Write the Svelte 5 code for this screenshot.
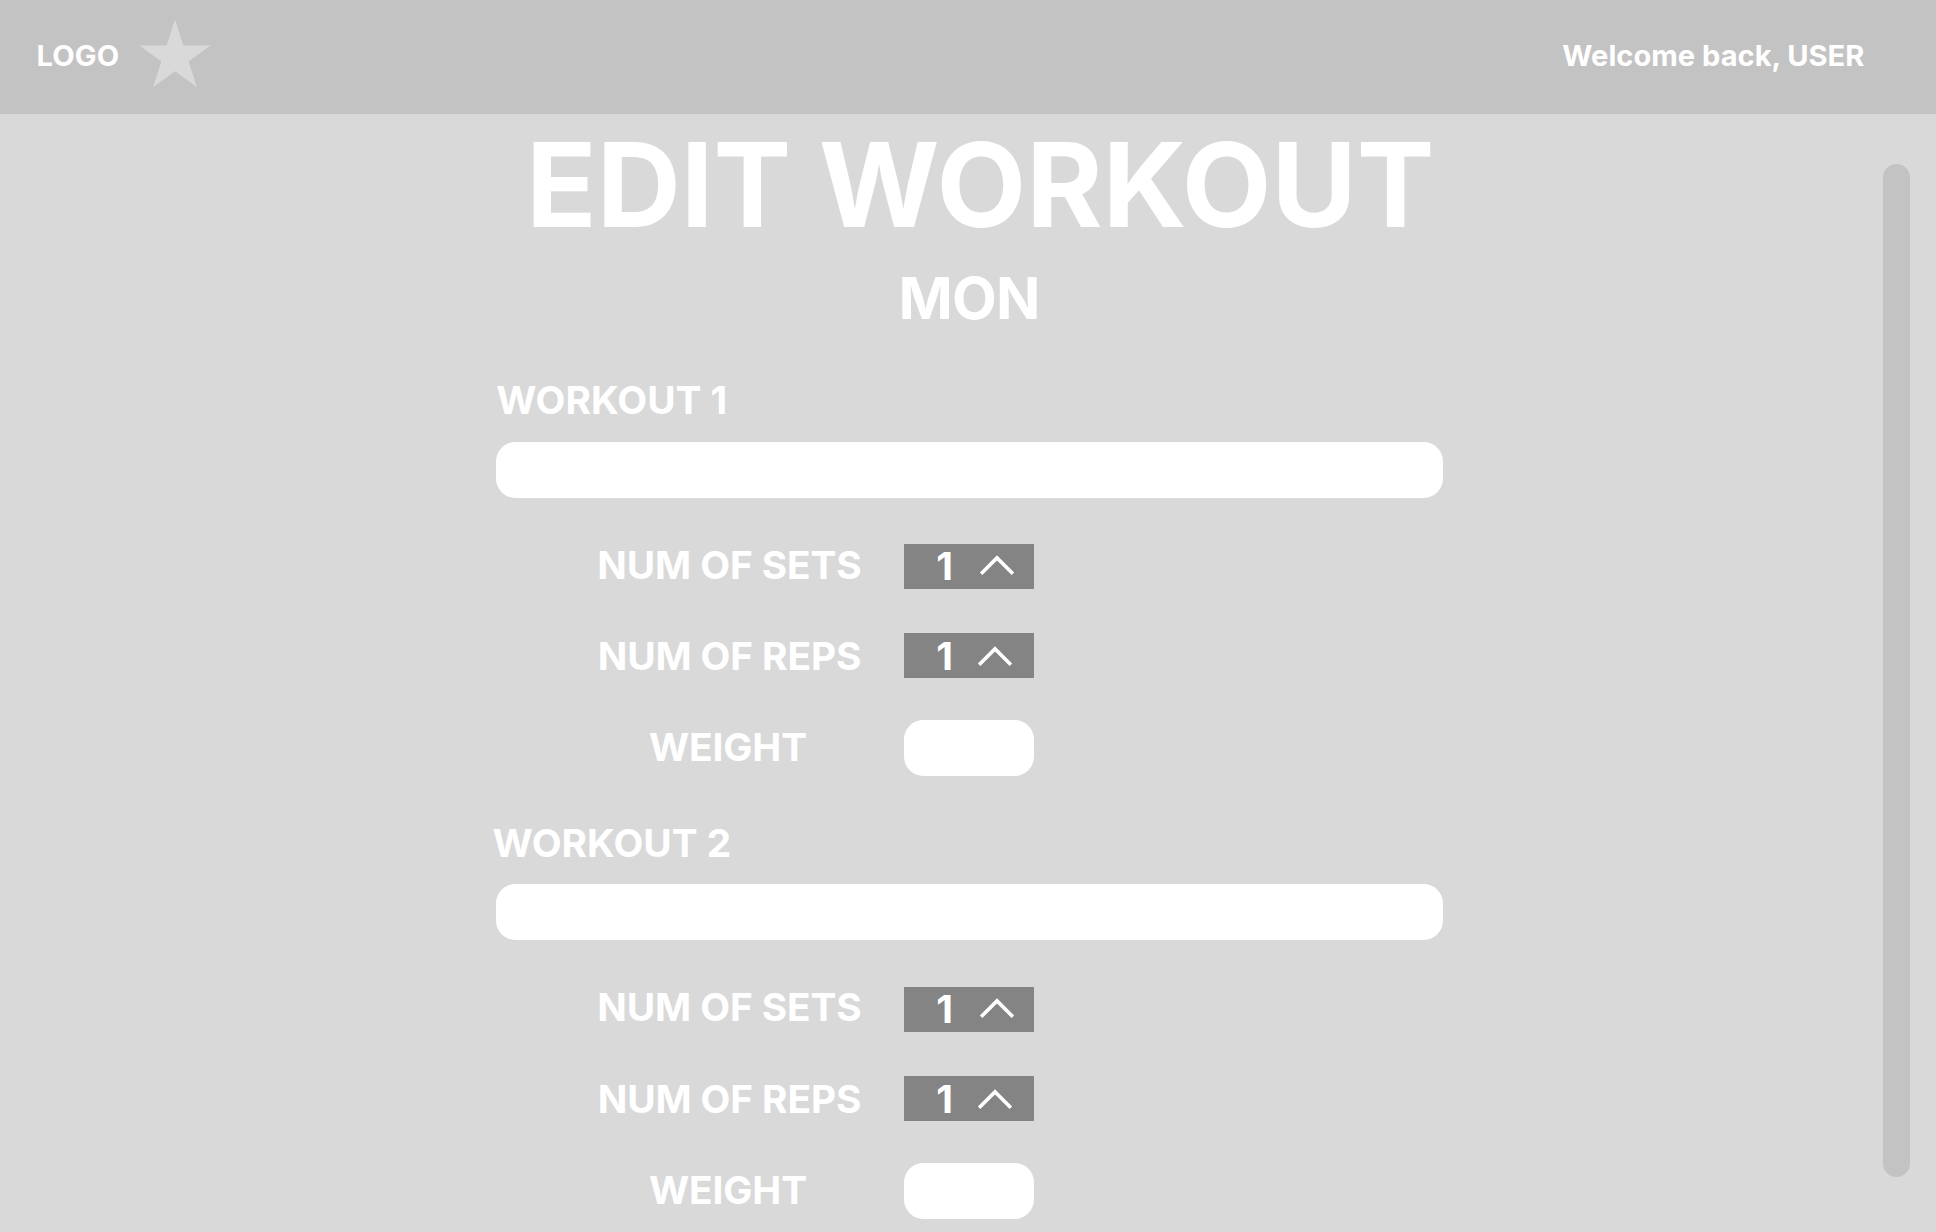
<script>
  const workouts = [
    { id: 1, sets: 1, reps: 1 },
    { id: 2, sets: 1, reps: 1 },
  ];
</script>

{#snippet stepper(value, kind)}
  <button class="stepper {kind}" type="button">
    <span class="value">{value}</span>
    <svg class="chevron" width="36" height="24" viewBox="0 0 36 24" aria-hidden="true">
      <path d="M2.1 18.7 L18 2.9 L33.9 18.7" />
    </svg>
  </button>
{/snippet}

<div class="page">
  <header>
    <div class="brand">
      <span class="logo">LOGO</span>
      <svg class="star" width="72" height="69" viewBox="-36 -38 72 69" aria-hidden="true">
        <polygon
          points="0,-37.5 8.4,-11.6 35.7,-11.6 13.6,4.4 22,30.3 0,14.3 -22,30.3 -13.6,4.4 -35.7,-11.6 -8.4,-11.6"
        />
      </svg>
    </div>
    <span class="welcome">Welcome back, USER</span>
  </header>

  <div class="body">
    <main>
      <h1>EDIT WORKOUT</h1>
      <h2>MON</h2>
      {#each workouts as workout (workout.id)}
        <section>
          <h3>WORKOUT {workout.id}</h3>
          <div class="field name"></div>
          <div class="details">
            <div class="labels">
              <span>NUM OF SETS</span>
              <span>NUM OF REPS</span>
              <span class="weight-label">WEIGHT</span>
            </div>
            <div class="controls">
              {@render stepper(workout.sets, 'sets')}
              {@render stepper(workout.reps, 'reps')}
              <div class="field weight"></div>
            </div>
          </div>
        </section>
      {/each}
    </main>
    <div class="scrollbar"></div>
  </div>
</div>

<style>
  :global(body) {
    overflow: hidden;
    background: #d9d9d9;
  }

  .page {
    display: flex;
    flex-direction: column;
    height: 1232px;
    overflow: hidden;
    background: #d9d9d9;
    color: #fff;
    font-family: Inter, 'Liberation Sans', sans-serif;
    font-weight: 700;
  }

  header {
    display: flex;
    flex: none;
    justify-content: space-between;
    box-sizing: border-box;
    height: 114px;
    padding: 18px 71.6px 0 36.6px;
    background: #c3c3c3;
    font-size: 29.1px;
    line-height: 76px;
  }

  .brand {
    display: flex;
  }

  .logo {
    width: 102px;
    letter-spacing: 0.1px;
  }

  .star {
    margin-top: 0.5px;
    fill: #d9d9d9;
  }

  .body {
    display: flex;
    flex: 1;
    justify-content: space-between;
    min-height: 0;
    padding: 0 26px 0 495.5px;
  }

  main {
    width: 947.2px;
  }

  h1,
  h2,
  h3 {
    margin: 0;
    font-weight: 700;
    white-space: nowrap;
  }

  h1 {
    padding-left: 30.5px;
    font-size: 116.4px;
    line-height: 141px;
  }

  h2 {
    font-size: 58.2px;
    letter-spacing: -0.7px;
    line-height: 86px;
    text-align: center;
  }

  section {
    box-sizing: border-box;
    height: 442.6px;
    padding-top: 39px;
  }

  h3 {
    display: flex;
    justify-content: center;
    width: 232.6px;
    font-size: 38.8px;
    line-height: 39px;
  }

  .field {
    border-radius: 19.4px;
    background: #fff;
  }

  .name {
    height: 56px;
    margin-top: 22.8px;
  }

  .details {
    display: flex;
    padding-left: 100px;
  }

  .labels {
    display: flex;
    flex-direction: column;
    width: 268px;
    margin-top: 21px;
    font-size: 38.8px;
    letter-spacing: -0.1px;
    line-height: 91.2px;
    text-align: center;
    white-space: nowrap;
  }

  .weight-label {
    padding-right: 3px;
  }

  .controls {
    display: flex;
    flex-direction: column;
    width: 130px;
    margin-top: 46.2px;
    margin-left: 40.7px;
  }

  .stepper {
    display: flex;
    align-items: center;
    box-sizing: border-box;
    width: 130px;
    height: 45px;
    margin: 0 0 44px;
    padding: 0 0 2px 32px;
    border: 0;
    background: #848484;
    color: #fff;
    font: inherit;
    font-size: 38.8px;
    line-height: 45px;
  }

  .value {
    width: 42.5px;
    text-align: left;
  }

  .reps {
    margin-bottom: 42.4px;
    padding-bottom: 0;
  }

  .reps .value {
    width: 41.2px;
  }

  .chevron {
    flex: none;
    margin-top: 4px;
    fill: none;
    stroke: #fff;
    stroke-width: 3.6;
  }

  .reps .chevron {
    margin-top: 6px;
  }

  .weight {
    height: 56px;
  }

  .scrollbar {
    width: 27px;
    height: 1013px;
    margin-top: 49.6px;
    border-radius: 13.5px;
    background: #c3c3c3;
  }
</style>
